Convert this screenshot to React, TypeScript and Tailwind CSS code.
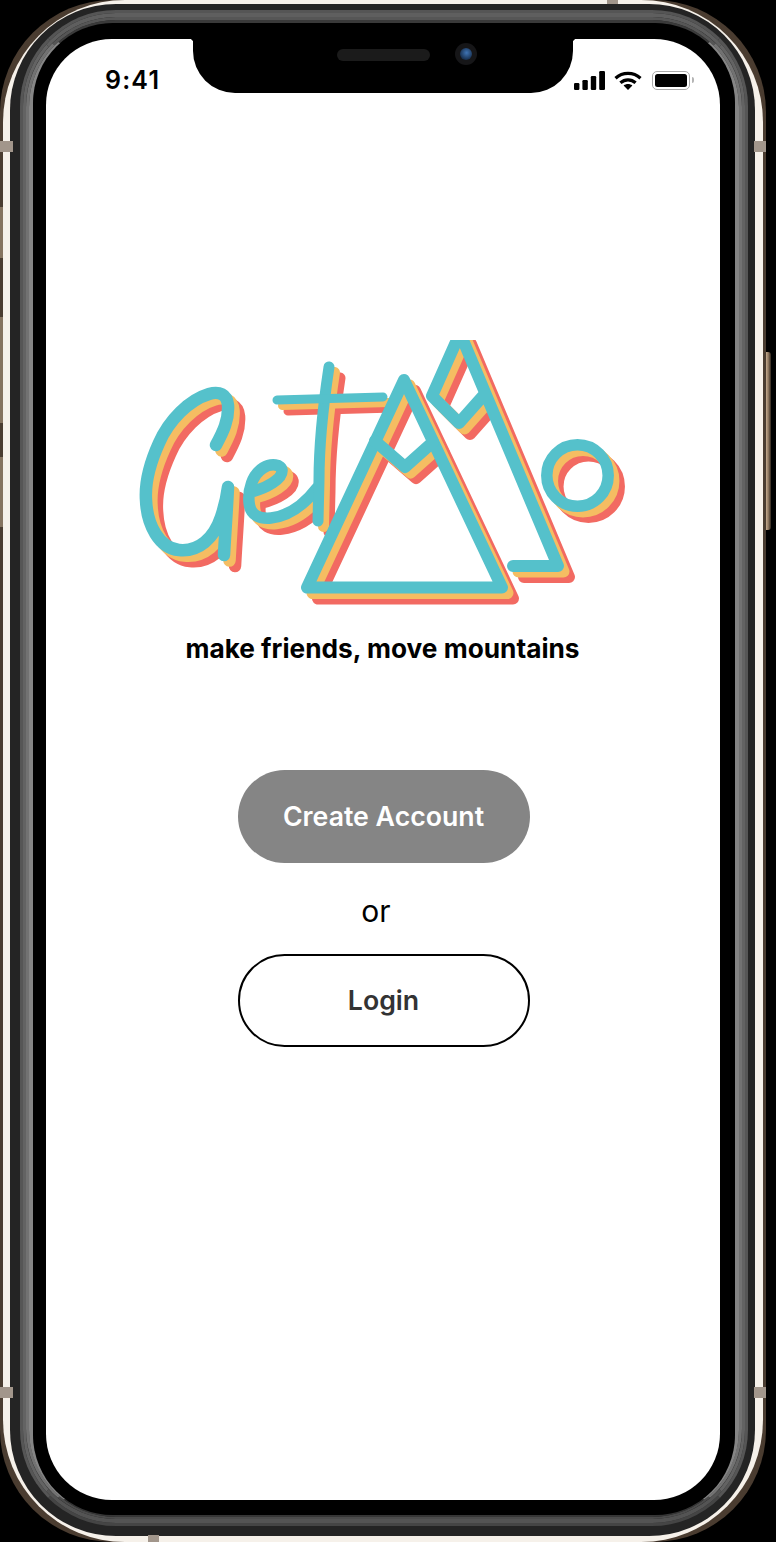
const sans = "font-['Inter',_'Noto_Sans',_sans-serif]"

function LogoStrokes() {
  return (
    <>
      {/* G */}
      <path strokeWidth={12.5} d="M217 445 C224 432 230 420 229 405 C228 394 220 391 210 394 C190 400 170 420 160 443 C150 465 146 485 147 500 C148 525 160 548 180 550 C200 552 215 538 222 517 C226 505 228 495 229 487 C228 510 226 535 225 555" />
      {/* e */}
      <path strokeWidth={11.5} d="M252 492 C268 488 283 479 283 471 C283 464 272 463 264 468 C253 475 249 490 250 502 C251 516 261 519 272 518 C290 516 305 505 318 488" />
      {/* t */}
      <path strokeWidth={11} d="M330 367 C325 400 320 440 320 480 L319 521" />
      <path strokeWidth={9} d="M278 400 L384 397" />
      {/* big mountain */}
      <path strokeWidth={12} d="M405 380 L308 587.5 H503 Z" />
      <path strokeWidth={12} d="M376 441 L406 467 L434 442" />
      {/* small mountain */}
      <path strokeWidth={12} d="M514 566 H559 L461 333 L433 396 L460 423 L484 396" />
      <circle cx={578.5} cy={475.5} r={30.7} strokeWidth={11.5} />
    </>
  )
}

function Logo() {
  return (
    <svg viewBox="135 340 500 270" className="w-[500px] h-[270px] shrink-0" fill="none" strokeLinecap="round" strokeLinejoin="round">
      <g stroke="#f26a62" transform="translate(11 11)">
        <LogoStrokes />
      </g>
      <g stroke="#f5bd62" transform="translate(5.5 5.5)">
        <LogoStrokes />
      </g>
      <g stroke="#55c1cb">
        <LogoStrokes />
      </g>
    </svg>
  )
}

function StatusIcons() {
  return (
    <div className="flex items-center">
      <svg viewBox="0 0 31 19" className="w-[31px] h-[19px]" fill="#000">
        <rect x="0" y="12" width="5.4" height="7" rx="1.2" />
        <rect x="8.4" y="9" width="5.4" height="10" rx="1.2" />
        <rect x="16.8" y="5" width="5.4" height="14" rx="1.2" />
        <rect x="25.2" y="0" width="5.8" height="19" rx="1.2" />
      </svg>
      <svg viewBox="0 0 28 20" className="ml-[9px] w-[28px] h-[20px]" fill="none" stroke="#000" strokeWidth="3.2">
        <path d="M1.5 8.2 C8.6 1.8 19.4 1.8 26.5 8.2" />
        <path d="M6.4 12.8 C10.9 8.8 17.1 8.8 21.6 12.8" />
        <path d="M9.6 15.4 L14 20 L18.4 15.4 C15.8 13.4 12.2 13.4 9.6 15.4 Z" fill="#000" stroke="none" />
      </svg>
      <div className="ml-[10px] w-[38px] h-[19px] rounded-[5px] border-[1.5px] border-[#a9a9a9] p-[2px]">
        <div className="w-full h-full rounded-[2.5px] bg-black" />
      </div>
      <div className="ml-[2px] w-[2px] h-[6px] rounded-r-sm bg-[#b4b4b4]" />
    </div>
  )
}

function Notch() {
  return (
    <div className="absolute top-0 left-[147px] w-[380px] h-[54px] bg-black rounded-b-[42px] flex items-start">
      <div className="absolute top-0 -left-[4px] w-[4px] h-[4px] bg-[radial-gradient(circle_at_0_100%,transparent_4px,#000_4.5px)]" />
      <div className="absolute top-0 -right-[4px] w-[4px] h-[4px] bg-[radial-gradient(circle_at_100%_100%,transparent_4px,#000_4.5px)]" />
      <div className="ml-[144px] mt-[10px] w-[93px] h-[12px] rounded-full bg-[#1b1b1b]" />
      <div className="ml-[25px] mt-[4px] w-[22px] h-[22px] rounded-full bg-[#161618] flex items-center justify-center">
        <div className="w-[12px] h-[12px] rounded-full bg-[radial-gradient(circle_at_55%_40%,#3f74b4,#183050_70%,#0c1420)]" />
      </div>
    </div>
  )
}

function Screen() {
  return (
    <div className={`relative flex-1 bg-white rounded-[66px] flex flex-col items-center ${sans}`}>
      <Notch />
      <div className="self-stretch flex items-center justify-between pt-[29px] pl-[59px] pr-[26px]">
        <span className="text-[25px] leading-[24px] font-semibold tracking-[1.2px] text-black">9:41</span>
        <StatusIcons />
      </div>
      <div className="mt-[248px] ml-[2px]">
        <Logo />
      </div>
      <p className="mt-[21px] -ml-[1px] text-[26.25px] leading-[36px] font-bold text-black">make friends, move mountains</p>
      <button className="mt-[103px] ml-[1px] w-[292px] h-[93px] rounded-full bg-[#858585] text-white text-[26.7px] font-semibold">
        Create Account
      </button>
      <span className="mt-[28px] -ml-[14px] text-[30px] leading-[40px] text-black">or</span>
      <button className="mt-[23px] ml-[1px] w-[292px] h-[93px] rounded-full border-2 border-black text-[#333333] text-[26.7px] font-semibold">
        Login
      </button>
    </div>
  )
}

export default function App() {
  return (
    <div className="relative w-[776px] h-[1542px] bg-black overflow-hidden">
      {/* metal rim */}
      <div className="flex w-[766px] h-[1542px] rounded-[112px] bg-[#4a3c30] px-[3px]">
        <div className="flex flex-1 rounded-[122px] bg-[#f6f1ea] pl-[7px] pr-[8px] pt-[4px] pb-[6px]">
          <div className="flex flex-1 rounded-[106px] bg-[#242424] pl-[10px] pr-[7px] pt-[6px] pb-[10px]">
            {/* inner bezel, mitred at the corners */}
            <div className="flex flex-1 rounded-[96px] border-x-[3px] border-t-[3px] border-b-[3px] border-x-[#565656] border-t-[#555555] border-b-[#454545]">
              <div className="flex flex-1 rounded-[93px] border-x-[3px] border-t-[4px] border-b-[4px] border-x-[#636363] border-t-[#5f5f5f] border-b-[#545454]">
                <div className="flex flex-1 rounded-[90px] border-x-[3px] border-t-[3px] border-b-[2px] border-x-[#727272] border-t-[#565656] border-b-[#4c4c4c]">
                  <div className="flex flex-1 rounded-[87px] border-x-[4px] border-t-[3px] border-b-[2px] border-x-[#858585] border-t-[#3a3a3a] border-b-[#363636]">
                    <div className="flex flex-1 rounded-[80px] bg-black pl-[13px] pr-[15px] pt-[16px] pb-[15px]">
                      <Screen />
                    </div>
                  </div>
                </div>
              </div>
            </div>
          </div>
        </div>
      </div>
      {/* lighter rim segments on the left edge */}
      <div className="absolute left-0 top-[207px] w-[3px] h-[51px] bg-[#85735f]" />
      <div className="absolute left-0 top-[317px] w-[3px] h-[106px] bg-[#85735f]" />
      <div className="absolute left-0 top-[457px] w-[3px] h-[70px] bg-[#85735f]" />
      {/* antenna bands */}
      <div className="absolute left-0 top-[141px] w-[13px] h-[11px] bg-[#a2968b]" />
      <div className="absolute left-0 top-[1387px] w-[13px] h-[11px] bg-[#a2968b]" />
      <div className="absolute left-[754px] top-[141px] w-[12px] h-[11px] bg-[#a2968b]" />
      <div className="absolute left-[754px] top-[1387px] w-[12px] h-[11px] bg-[#a2968b]" />
      <div className="absolute left-[607px] top-0 w-[11px] h-[4px] bg-[#a2968b]" />
      <div className="absolute left-[148px] top-[1535px] w-[11px] h-[7px] bg-[#a2968b]" />
      {/* side button */}
      <div className="absolute left-[766px] top-[352px] w-[5px] h-[178px] rounded-r-[3px] bg-[linear-gradient(90deg,#c7ad90,#8a735c_50%,#2f261d)]" />
    </div>
  )
}
